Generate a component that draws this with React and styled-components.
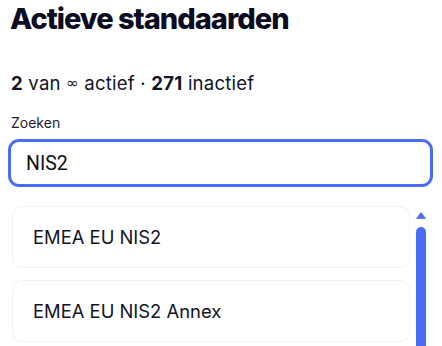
import React from 'react';
import styled, { createGlobalStyle } from 'styled-components';

const Global = createGlobalStyle`
  html, body {
    margin: 0;
    padding: 0;
    background: #ffffff;
    overflow: hidden;
  }
  body {
    font-family: Inter, "Liberation Sans", sans-serif;
    color: #0d0f24;
  }
`;

const Page = styled.div`
  height: 346px;
  box-sizing: border-box;
  padding: 0 9px 0 8px;
  display: flex;
  flex-direction: column;
`;

const Title = styled.h1`
  margin: 0;
  padding: 2px 0 0 2px;
  font-size: 29px;
  line-height: 34px;
  font-weight: 800;
  letter-spacing: -1px;
  color: #0b0c22;
`;

const Summary = styled.p`
  margin: 35px 0 0 3px;
  height: 24px;
  font-size: 18.6px;
  line-height: 24px;
  letter-spacing: 0.2px;
  color: #111326;

  b {
    font-weight: 700;
  }
`;

const Infinity = styled.span`
  font-family: "DejaVu Sans", sans-serif;
  font-size: 15px;
  line-height: 0;
  vertical-align: 2px;
`;

const Label = styled.label`
  display: block;
  margin: 19px 0 0 3px;
  font-size: 14px;
  line-height: 18px;
  color: #1b1d2e;
`;

const Search = styled.input`
  box-sizing: border-box;
  margin-top: 7px;
  width: 100%;
  height: 48px;
  flex: none;
  border: 3px solid #4a6cf7;
  border-radius: 11px;
  padding: 0 15px;
  font-family: Roboto, "Liberation Sans", sans-serif;
  font-size: 19.5px;
  color: #111;
  outline: none;
  background: #fff;
`;

const ListArea = styled.div`
  flex: 1;
  min-height: 0;
  margin: 15px 5px 0 0;
  display: flex;
  gap: 3px;
  overflow: hidden;
`;

const List = styled.ul`
  flex: 1;
  list-style: none;
  margin: 0;
  padding: 4px 0 0 4px;
  display: flex;
  flex-direction: column;
  gap: 12px;
  overflow: hidden;
`;

const Item = styled.li`
  flex: none;
  box-sizing: border-box;
  height: 62px;
  display: flex;
  align-items: center;
  padding: 0 20px;
  border: 1.5px solid #eef2f9;
  border-radius: 10px;
  font-size: 18.4px;
  color: #121427;
`;

const Track = styled.div`
  width: 15px;
  flex: none;
  display: flex;
  flex-direction: column;
  align-items: center;
  padding-top: 10px;
  gap: 8px;
`;

const Thumb = styled.div`
  width: 10px;
  flex: 1;
  background: #4a6cf7;
  border-radius: 5px 5px 0 0;
`;

const items = ['EMEA EU NIS2', 'EMEA EU NIS2 Annex'];

export default function App() {
  return (
    <Page>
      <Global />
      <Title>Actieve standaarden</Title>
      <Summary>
        <b>2</b> van <Infinity>∞</Infinity> actief · <b>271</b> inactief
      </Summary>
      <Label htmlFor="zoeken">Zoeken</Label>
      <Search id="zoeken" defaultValue="NIS2" />
      <ListArea>
        <List>
          {items.map((name) => (
            <Item key={name}>{name}</Item>
          ))}
        </List>
        <Track>
          <svg width="10" height="7" viewBox="0 0 10 7">
            <path d="M5 0.5 L9.5 6.5 L0.5 6.5 Z" fill="#4a6cf7" strokeLinejoin="round" stroke="#4a6cf7" strokeWidth="0.8" />
          </svg>
          <Thumb />
        </Track>
      </ListArea>
    </Page>
  );
}
